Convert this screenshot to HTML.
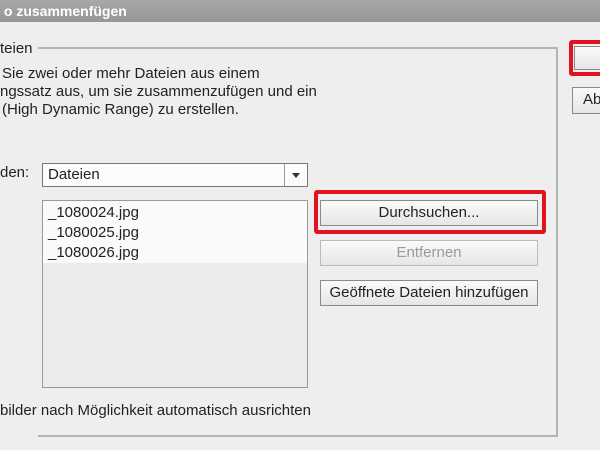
<!DOCTYPE html>
<html><head><meta charset="utf-8"><style>
body{margin:0;width:600px;height:450px;overflow:hidden;background:#eeeeee;font-family:"Liberation Sans","DejaVu Sans",sans-serif;font-size:15px;color:#222;position:relative}
div{position:absolute;box-sizing:border-box}
.t{white-space:nowrap}
.btn{background:linear-gradient(#fafafa,#e6e6e6);border:1px solid #8a8a8a;text-align:center;line-height:24px}
.red{border:4px solid #e0141e;border-radius:3px}
</style></head><body>
<div style="left:0;top:0;width:600px;height:22px;background:linear-gradient(#a8a8a8,#979797);color:#fff;font-weight:bold;font-size:14px;line-height:22px" class="t">&nbsp;o zusammenfügen</div>
<div style="left:38px;top:47px;width:520px;height:390px;border-top:2px solid #b4b4b4;border-right:2px solid #b4b4b4;border-bottom:2px solid #b4b4b4"></div>
<div class="t" style="left:0;top:40px;background:#eeeeee;padding:0 4px 0 0">teien</div>
<div class="t" style="left:2px;top:65px;line-height:18px">Sie zwei oder mehr Dateien aus einem<br><span style="margin-left:-2px">ngssatz aus, um sie zusammenzufügen und ein</span><br>(High Dynamic Range) zu erstellen.</div>
<div class="t" style="left:0;top:164px">den:</div>
<div style="left:42px;top:163px;width:266px;height:24px;border:1px solid #777;background:#fcfcfc"></div>
<div class="t" style="left:48px;top:166px">Dateien</div>
<div style="left:284px;top:164px;width:1px;height:22px;background:#999"></div>
<div style="left:292px;top:173px;width:0;height:0;border-left:4px solid transparent;border-right:4px solid transparent;border-top:5px solid #333"></div>
<div style="left:42px;top:200px;width:266px;height:188px;border:1px solid #999;background:#ececec"></div>
<div style="left:43px;top:201px;width:264px;height:62px;background:#fafafa"></div>
<div class="t" style="left:48px;top:203px;line-height:20px">_1080024.jpg<br>_1080025.jpg<br>_1080026.jpg</div>
<div class="red" style="left:314px;top:190px;width:232px;height:44px"></div>
<div class="btn" style="left:320px;top:200px;width:218px;height:26px">Durchsuchen...</div>
<div class="btn" style="left:320px;top:240px;width:218px;height:26px;color:#999;border-color:#bbb">Entfernen</div>
<div class="btn" style="left:320px;top:280px;width:218px;height:26px">Geöffnete Dateien hinzufügen</div>
<div class="red" style="left:569px;top:40px;width:40px;height:36px"></div>
<div class="btn" style="left:574px;top:46px;width:40px;height:24px"></div>
<div class="btn t" style="left:572px;top:87px;width:40px;height:27px;text-align:left;padding-left:10px">Ab</div>
<div class="t" style="left:0;top:402px">bilder nach Möglichkeit automatisch ausrichten</div>
</body></html>
